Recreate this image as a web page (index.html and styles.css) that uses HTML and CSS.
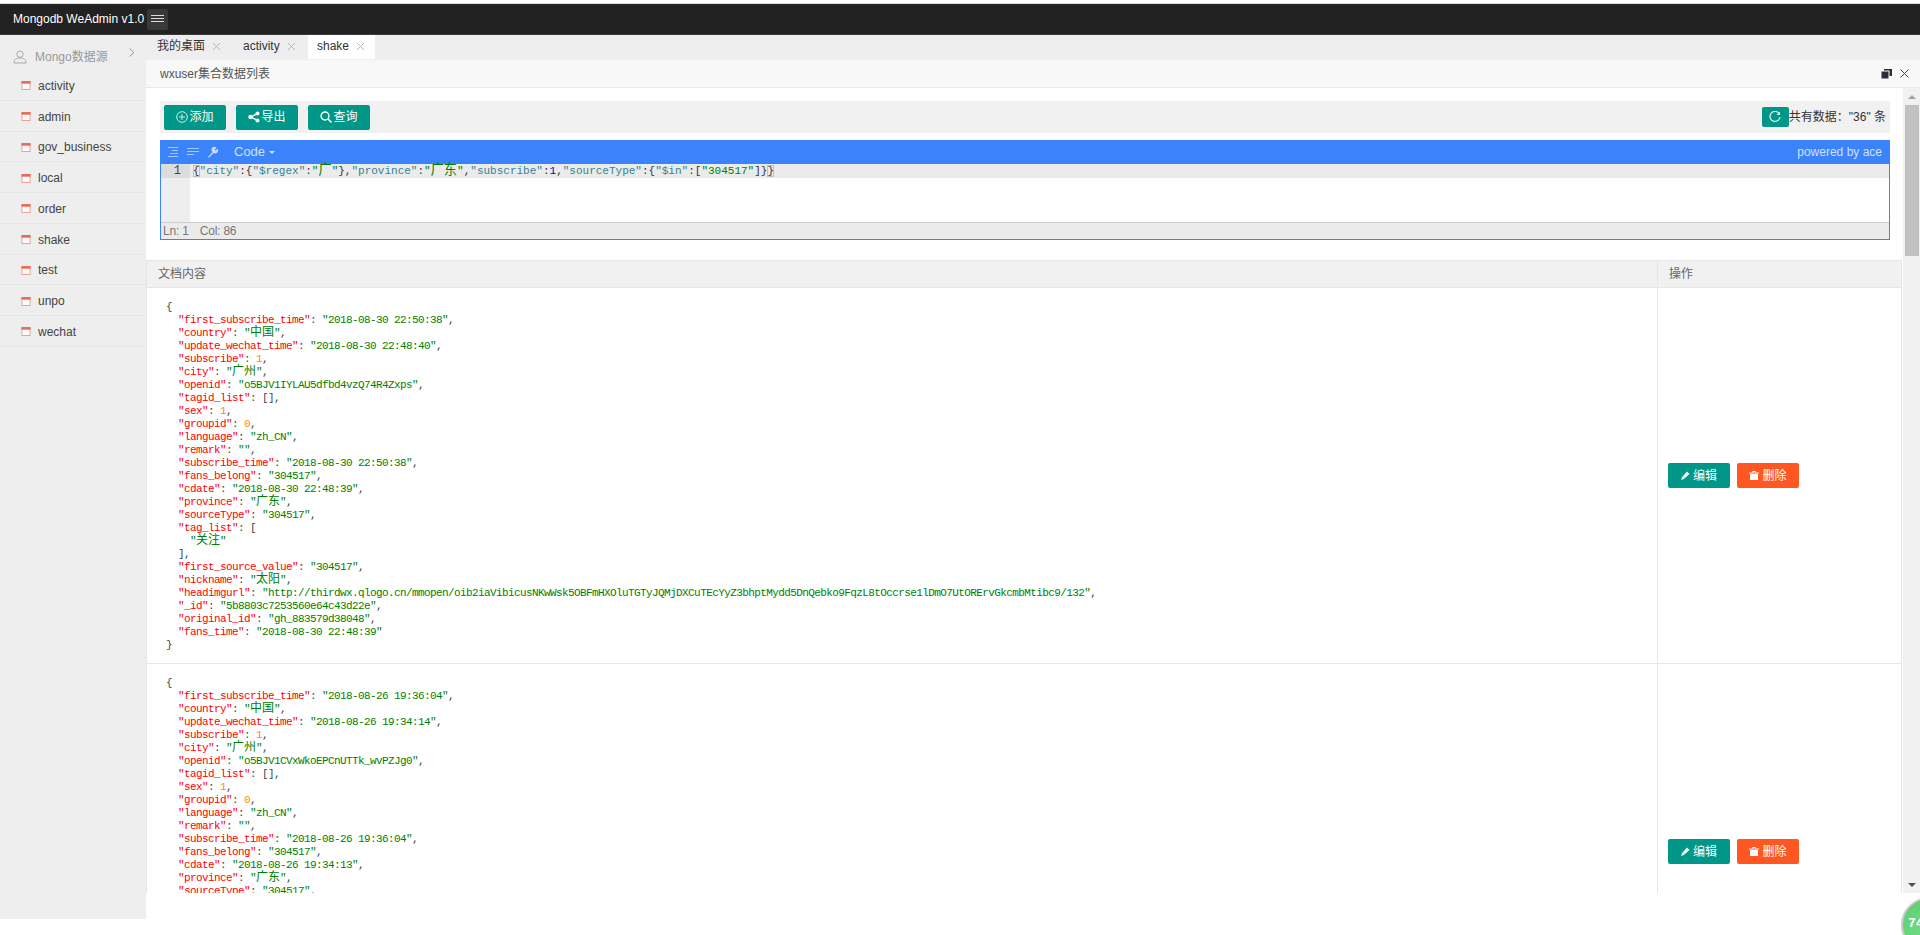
FILE: index.html
```html
<!DOCTYPE html>
<html lang="zh">
<head>
<meta charset="utf-8">
<title>Mongodb WeAdmin v1.0</title>
<link rel="stylesheet" href="styles.css">
</head>
<body>
<svg class="defs" width="0" height="0" aria-hidden="true">
  <symbol id="win" viewBox="0 0 10 10"><rect x="0.5" y="0.5" width="9" height="9" fill="#fff" stroke="#f0958a"/><rect x="0" y="0" width="10" height="3" fill="#ec6a58"/></symbol>
  <symbol id="x" viewBox="0 0 9 9"><path d="M1 1l7 7M8 1l-7 7" stroke="#b5b5b5" fill="none"/></symbol>
</svg>
<header class="topbar">
  <span class="logo">Mongodb WeAdmin v1.0</span>
  <span class="menu-btn"><svg width="13" height="8" viewBox="0 0 13 8"><path d="M0 .5h13M0 3.5h13M0 6.5h13" stroke="#ddd" fill="none"/></svg></span>
</header>
<div class="layout">
  <aside class="sidebar">
    <div class="side-head">
      <svg class="user" width="14" height="14" viewBox="0 0 14 14"><circle cx="7" cy="4.2" r="3.2" fill="none" stroke="#aaa"/><path d="M1 13c0-3.4 2.4-5 6-5s6 1.600 6 5z" fill="none" stroke="#aaa"/></svg>
      <span class="side-title">Mongo数据源</span>
      <svg class="chev" width="6" height="9" viewBox="0 0 6 9"><path d="M.5.500l4.500 4-4.500 4" fill="none" stroke="#999"/></svg>
    </div>
    <ul class="side-list">
      <li class="side-item"><svg class="win" width="10" height="9"><use href="#win"/></svg>activity</li>
      <li class="side-item"><svg class="win" width="10" height="9"><use href="#win"/></svg>admin</li>
      <li class="side-item"><svg class="win" width="10" height="9"><use href="#win"/></svg>gov_business</li>
      <li class="side-item"><svg class="win" width="10" height="9"><use href="#win"/></svg>local</li>
      <li class="side-item"><svg class="win" width="10" height="9"><use href="#win"/></svg>order</li>
      <li class="side-item"><svg class="win" width="10" height="9"><use href="#win"/></svg>shake</li>
      <li class="side-item"><svg class="win" width="10" height="9"><use href="#win"/></svg>test</li>
      <li class="side-item"><svg class="win" width="10" height="9"><use href="#win"/></svg>unpo</li>
      <li class="side-item"><svg class="win" width="10" height="9"><use href="#win"/></svg>wechat</li>
    </ul>
  </aside>
  <main class="main">
    <nav class="tabs">
      <span class="tab tab-first">我的桌面<svg class="tab-x" width="9" height="9"><use href="#x"/></svg></span>
      <span class="tab tab-second">activity<svg class="tab-x" width="9" height="9"><use href="#x"/></svg></span>
      <span class="tab tab-on">shake<svg class="tab-x" width="9" height="9"><use href="#x"/></svg></span>
    </nav>
    <div class="panel-title">
      <span class="panel-name">wxuser集合数据列表</span>
      <span class="panel-tools">
        <svg width="11" height="10" viewBox="0 0 11 10"><rect x="3" y="0" width="8" height="7" fill="#2b2b3a"/><rect x="0" y="2" width="8" height="8" fill="#2b2b3a" stroke="#f8f8f8" stroke-width="1"/></svg>
        <svg width="9" height="9" viewBox="0 0 9 9"><path d="M.5.500l8 8M8.500.500l-8 8" stroke="#444" fill="none"/></svg>
      </span>
    </div>
    <div class="frame">
      <div class="scroll">
        <div class="toolbar">
          <a class="btn teal wide"><svg width="12" height="12" viewBox="0 0 12 12"><circle cx="6" cy="6" r="5.300" fill="none" stroke="#cfeeea"/><path d="M6 3v6M3 6h6" stroke="#cfeeea"/></svg>添加</a>
          <a class="btn teal wide"><svg width="12" height="12" viewBox="0 0 12 12"><path d="M9.500 2.500L3 6l6.500 3.500" stroke="#fff" stroke-width="1.400" fill="none"/><circle cx="9.500" cy="2.500" r="2" fill="#fff"/><circle cx="2.500" cy="6" r="2.200" fill="#fff"/><circle cx="9.500" cy="9.500" r="2" fill="#fff"/></svg>导出</a>
          <a class="btn teal wide"><svg width="12" height="12" viewBox="0 0 12 12"><circle cx="5" cy="5" r="4" fill="none" stroke="#fff" stroke-width="1.300"/><path d="M8 8l3.500 3.500" stroke="#fff" stroke-width="1.600"/></svg>查询</a>
          <span class="total">
            <a class="refresh"><svg width="12" height="12" viewBox="0 0 12 12"><path d="M10.500 3.200A5 5 0 1 0 11 6" fill="none" stroke="#e4f5f3" stroke-width="1.200"/><path d="M11 .500v3.500H7.500z" fill="#e4f5f3"/></svg></a>共有数据："36" 条
          </span>
        </div>
        <section class="editor">
          <div class="ed-bar">
            <svg class="ed-ico" width="12" height="10" viewBox="0 0 12 10"><path d="M1 .5h10M5 3.500h6M3 6.500h8M1 9.500h10" stroke="#a9c8fb" fill="none"/></svg>
            <svg class="ed-ico" width="12" height="10" viewBox="0 0 12 10"><path d="M0 1.500h12M0 4.500h12M0 7.500h7" stroke="#a9c8fb" fill="none"/></svg>
            <svg class="ed-ico" width="11" height="11" viewBox="0 0 11 11"><path d="M1 10l4.500-5A3 3 0 0 1 9.500.500L7.800 2.500l.8 1 2-1.700A3 3 0 0 1 6.500 6L2 10.800z" fill="#c8dcfd"/></svg>
            <span class="ed-mode">Code<i class="caret"></i></span>
            <span class="ed-power">powered by ace</span>
          </div>
          <div class="ed-body">
            <div class="ed-gutter"><div class="ed-num">1</div></div>
            <div class="ed-lines"><div class="ed-line"><span class="c-p c-match">{</span><span class="c-k">"city"</span><span class="c-p">:{</span><span class="c-k">"$regex"</span><span class="c-p">:</span><span class="c-s">"<span class="zh2">广</span>"</span><span class="c-p">},</span><span class="c-k">"province"</span><span class="c-p">:</span><span class="c-s">"<span class="zh2">广东</span>"</span><span class="c-p">,</span><span class="c-k">"subscribe"</span><span class="c-p">:</span><span class="c-n">1</span><span class="c-p">,</span><span class="c-k">"sourceType"</span><span class="c-p">:{</span><span class="c-k">"$in"</span><span class="c-p">:[</span><span class="c-s">"304517"</span><span class="c-p">]}</span><span class="c-p c-match">}</span></div></div>
          </div>
          <div class="ed-status"><span>Ln: 1</span><span>Col: 86</span></div>
        </section>
        <table class="docs">
          <colgroup><col class="col-doc"><col class="col-op"></colgroup>
          <thead><tr><th>文档内容</th><th>操作</th></tr></thead>
          <tbody>
            <tr class="row">
              <td class="doc-cell">
                <div class="doc">
                  <div class="ln">{</div>
                  <div class="ln">  <b>"first_subscribe_time"</b>: <u>"2018-08-30 22:50:38"</u>,</div>
                  <div class="ln">  <b>"country"</b>: <u>"<span class="zh">中国</span>"</u>,</div>
                  <div class="ln">  <b>"update_wechat_time"</b>: <u>"2018-08-30 22:48:40"</u>,</div>
                  <div class="ln">  <b>"subscribe"</b>: <em>1</em>,</div>
                  <div class="ln">  <b>"city"</b>: <u>"<span class="zh">广州</span>"</u>,</div>
                  <div class="ln">  <b>"openid"</b>: <u>"o5BJV1IYLAU5dfbd4vzQ74R4Zxps"</u>,</div>
                  <div class="ln">  <b>"tagid_list"</b>: [],</div>
                  <div class="ln">  <b>"sex"</b>: <em>1</em>,</div>
                  <div class="ln">  <b>"groupid"</b>: <em>0</em>,</div>
                  <div class="ln">  <b>"language"</b>: <u>"zh_CN"</u>,</div>
                  <div class="ln">  <b>"remark"</b>: <u>""</u>,</div>
                  <div class="ln">  <b>"subscribe_time"</b>: <u>"2018-08-30 22:50:38"</u>,</div>
                  <div class="ln">  <b>"fans_belong"</b>: <u>"304517"</u>,</div>
                  <div class="ln">  <b>"cdate"</b>: <u>"2018-08-30 22:48:39"</u>,</div>
                  <div class="ln">  <b>"province"</b>: <u>"<span class="zh">广东</span>"</u>,</div>
                  <div class="ln">  <b>"sourceType"</b>: <u>"304517"</u>,</div>
                  <div class="ln">  <b>"tag_list"</b>: [</div>
                  <div class="ln">    <u>"<span class="zh">关注</span>"</u></div>
                  <div class="ln">  ],</div>
                  <div class="ln">  <b>"first_source_value"</b>: <u>"304517"</u>,</div>
                  <div class="ln">  <b>"nickname"</b>: <u>"<span class="zh">太阳</span>"</u>,</div>
                  <div class="ln">  <b>"headimgurl"</b>: <u>"http://thirdwx.qlogo.cn/mmopen/oib2iaVibicusNKwWsk5OBFmHXOluTGTyJQMjDXCuTEcYyZ3bhptMydd5DnQebko9FqzL8tOccrse1lDmO7UtORErvGkcmbMtibc9/132"</u>,</div>
                  <div class="ln">  <b>"_id"</b>: <u>"5b8803c7253560e64c43d22e"</u>,</div>
                  <div class="ln">  <b>"original_id"</b>: <u>"gh_883579d38048"</u>,</div>
                  <div class="ln">  <b>"fans_time"</b>: <u>"2018-08-30 22:48:39"</u></div>
                  <div class="ln">}</div>
                </div>
              </td>
              <td class="op-cell"><a class="btn teal op"><svg width="9" height="9" viewBox="0 0 9 9"><path d="M0 9l1-3 5-5.500 2.500 2.500-5.500 5z" fill="#e6f6f4"/></svg>编辑</a><a class="btn orange op"><svg width="10" height="9" viewBox="0 0 10 9"><path d="M0 2h10M3.500 1.500V.5h3v1" stroke="#fff" fill="none"/><path d="M1 3h8v6H1z" fill="#fff"/></svg>删除</a></td>
            </tr>
            <tr class="row">
              <td class="doc-cell">
                <div class="doc">
                  <div class="ln">{</div>
                  <div class="ln">  <b>"first_subscribe_time"</b>: <u>"2018-08-26 19:36:04"</u>,</div>
                  <div class="ln">  <b>"country"</b>: <u>"<span class="zh">中国</span>"</u>,</div>
                  <div class="ln">  <b>"update_wechat_time"</b>: <u>"2018-08-26 19:34:14"</u>,</div>
                  <div class="ln">  <b>"subscribe"</b>: <em>1</em>,</div>
                  <div class="ln">  <b>"city"</b>: <u>"<span class="zh">广州</span>"</u>,</div>
                  <div class="ln">  <b>"openid"</b>: <u>"o5BJV1CVxWkoEPCnUTTk_wvPZJg0"</u>,</div>
                  <div class="ln">  <b>"tagid_list"</b>: [],</div>
                  <div class="ln">  <b>"sex"</b>: <em>1</em>,</div>
                  <div class="ln">  <b>"groupid"</b>: <em>0</em>,</div>
                  <div class="ln">  <b>"language"</b>: <u>"zh_CN"</u>,</div>
                  <div class="ln">  <b>"remark"</b>: <u>""</u>,</div>
                  <div class="ln">  <b>"subscribe_time"</b>: <u>"2018-08-26 19:36:04"</u>,</div>
                  <div class="ln">  <b>"fans_belong"</b>: <u>"304517"</u>,</div>
                  <div class="ln">  <b>"cdate"</b>: <u>"2018-08-26 19:34:13"</u>,</div>
                  <div class="ln">  <b>"province"</b>: <u>"<span class="zh">广东</span>"</u>,</div>
                  <div class="ln">  <b>"sourceType"</b>: <u>"304517"</u>,</div>
                </div>
              </td>
              <td class="op-cell"><a class="btn teal op"><svg width="9" height="9" viewBox="0 0 9 9"><path d="M0 9l1-3 5-5.500 2.500 2.500-5.500 5z" fill="#e6f6f4"/></svg>编辑</a><a class="btn orange op"><svg width="10" height="9" viewBox="0 0 10 9"><path d="M0 2h10M3.500 1.500V.5h3v1" stroke="#fff" fill="none"/><path d="M1 3h8v6H1z" fill="#fff"/></svg>删除</a></td>
            </tr>
          </tbody>
        </table>
      </div>
      <div class="scrollbar">
        <span class="sb-up"></span>
        <span class="sb-thumb"></span>
        <span class="sb-down"></span>
      </div>
    </div>
  </main>
</div>
<div class="ball">74</div>
</body>
</html>
```
FILE: styles.css
```css
* { box-sizing: border-box; }
html, body { margin: 0; height: 935px; overflow: hidden; background: #fff; }
body {
  position: relative;
  padding-top: 3px;
  font: 12px/1.5 "Liberation Sans", "Noto Sans CJK SC", sans-serif;
  color: #333;
}
.defs { position: absolute; }
.topbar {
  height: 32px;
  background: #222;
  border-top: 1px solid #ddd;
  border-bottom: 1px solid #3a3a3a;
  display: flex;
  align-items: center;
  padding-left: 13px;
  gap: 3px;
  color: #fff;
}
.logo { color: #fff; line-height: 30px; }
.menu-btn {
  width: 21px;
  height: 21px;
  background: #393939;
  border-radius: 2px;
  display: flex;
  align-items: center;
  justify-content: center;
}
.layout { display: flex; align-items: flex-start; }
.sidebar { width: 146px; height: 884px; background: #eee; flex: none; }
.side-head { height: 35px; display: flex; align-items: center; padding: 9px 0 0 13px; color: #999; }
.side-title { margin-left: 8px; color: #999; }
.chev { margin-left: 21px; margin-top: -10px; }
.side-list { list-style: none; margin: 0; padding: 0; }
.side-item {
  height: 30.75px;
  display: flex;
  align-items: center;
  padding-left: 21px;
  border-bottom: 1px solid #e6e6e6;
  color: #444;
  padding-top: 2px;
}
.win { margin-right: 7px; flex: none; }

.main { flex: 1; min-width: 0; }
.tabs { height: 24px; background: #eeeef0; display: flex; line-height: 20px; }
.tab { display: flex; height: 24px; align-items: flex-start; padding-top: 1px; color: #333; }
.tab-first { padding-left: 11px; width: 86px; }
.tab-second { padding-left: 11px; width: 76px; }
.tab-on { background: #fff; padding-left: 9px; width: 67px; }
.tab-x { margin-left: 7px; margin-top: 6px; flex: none; }

.panel-title {
  height: 29px;
  background: #f8f8f8;
  border-top: 1px solid #f0f0f0;
  border-bottom: 1px solid #e8e8e8;
  display: flex;
  align-items: center;
  justify-content: space-between;
  padding: 0 11px 0 14px;
  color: #555;
}
.panel-tools { display: flex; align-items: center; gap: 8px; }

.frame { display: flex; height: 805px; }
.scroll { flex: 1; min-width: 0; overflow: hidden; padding-top: 13px; }
.scrollbar {
  width: 17px;
  flex: none;
  background: #f1f1f1;
  display: flex;
  flex-direction: column;
  align-items: center;
  padding: 7px 0 6px;
}
.sb-up, .sb-down { width: 0; height: 0; border-left: 4px solid transparent; border-right: 4px solid transparent; }
.sb-up { border-bottom: 4px solid #a3a3a3; }
.sb-down { border-top: 4px solid #505050; margin-top: auto; }
.sb-thumb { width: 14px; height: 151px; background: #c1c1c1; margin-top: 6px; margin-left: 1px; }

.toolbar {
  height: 32px;
  margin: 0 13px 0 14px;
  background: #f1f1f1;
  display: flex;
  align-items: center;
  padding-left: 4px;
  gap: 10px;
}
.btn {
  display: inline-flex;
  align-items: center;
  justify-content: center;
  height: 25px;
  border-radius: 2px;
  color: #fff;
  gap: 1px;
}
.wide { width: 62px; }
.teal { background: #009688; }
.orange { background: #ff5722; }
.total { margin-left: auto; display: flex; align-items: center; color: #333; padding-right: 4px; }
.refresh {
  width: 27px;
  height: 20px;
  background: #009688;
  border-radius: 2px;
  display: flex;
  align-items: center;
  justify-content: center;
}

.editor {
  margin: 7px 13px 20px 14px;
  height: 100px;
  border: 1px solid #3a83fb;
  border-top: 0;
  display: flex;
  flex-direction: column;
  background: #fff;
}
.ed-bar {
  height: 24px;
  margin: 0 -1px;
  background: #3a83fb;
  display: flex;
  align-items: center;
  padding: 0 8px 0 7px;
  gap: 8px;
  color: #cfe1fe;
}
.ed-mode { margin-left: 8px; font-size: 13px; display: flex; align-items: center; }
.caret { border-top: 3px solid #cfe1fe; border-left: 3px solid transparent; border-right: 3px solid transparent; margin-left: 4px; }
.ed-power { margin-left: auto; }
.ed-body { flex: 1; display: flex; min-height: 0; }
.ed-gutter { width: 29px; background: #eee; flex: none; }
.ed-num { height: 14px; background: #dcdcdc; text-align: right; padding-right: 9px; font: 12px/15px "Liberation Mono", monospace; color: #444; }
.ed-lines { flex: 1; min-width: 0; }
.ed-line {
  height: 14px;
  background: #ebebeb;
  padding-left: 3px;
  font: 11px/15px "Liberation Mono", monospace;
  white-space: pre;
}
.c-p { color: #333; }
.c-k { color: #318495; }
.c-s { color: #008000; }
.c-n { color: #0000cd; }
.c-match { box-shadow: inset 0 0 0 1px #c0c0c0; }
.zh2 { font-family: "Noto Sans CJK SC", sans-serif; font-size: 13.200px; line-height: 0; }
.ed-status {
  height: 17px;
  background: #ebebeb;
  border-top: 1px solid #ccc;
  display: flex;
  align-items: center;
  gap: 11px;
  padding-left: 2px;
  color: #777;
  letter-spacing: -.2px;
}

.docs {
  width: 1756px;
  table-layout: fixed;
  border-collapse: collapse;
  margin-left: 0;
}
.col-doc { width: 1511px; }
.docs th {
  height: 27px;
  background: #f1f1f1;
  border: 1px solid #e6e6e6;
  text-align: left;
  font-weight: 400;
  color: #666;
  padding: 0 11px;
}
.docs td { border: 1px solid #e6e6e6; padding: 0; }
.row { height: 376px; }
.doc-cell { vertical-align: top; }
.doc { padding: 13px 0 0 19px; color: #444; font: 11px/13px "Liberation Mono", monospace; letter-spacing: -.6px; }
.ln { height: 13px; white-space: pre; }
.ln b { font-weight: 400; color: #f00; }
.ln u { text-decoration: none; color: #008000; }
.ln em { font-style: normal; color: #ff8c00; }
.zh { font-family: "Noto Sans CJK SC", sans-serif; font-size: 12px; letter-spacing: 0; line-height: 0; }
.op-cell { vertical-align: middle; padding-left: 10px !important; }
.op { width: 62px; margin-left: 0; margin-right: 7px; gap: 3px; }

.ball {
  position: absolute;
  left: 1901px;
  top: 897px;
  width: 56px;
  height: 56px;
  border-radius: 50%;
  border: 2px solid #ccc;
  background: radial-gradient(circle at 40% 60%, #6fdc82, #57c870);
  color: #fff;
  font: 700 13px/50px "Liberation Mono", monospace;
  padding-left: 5px;
}
```
